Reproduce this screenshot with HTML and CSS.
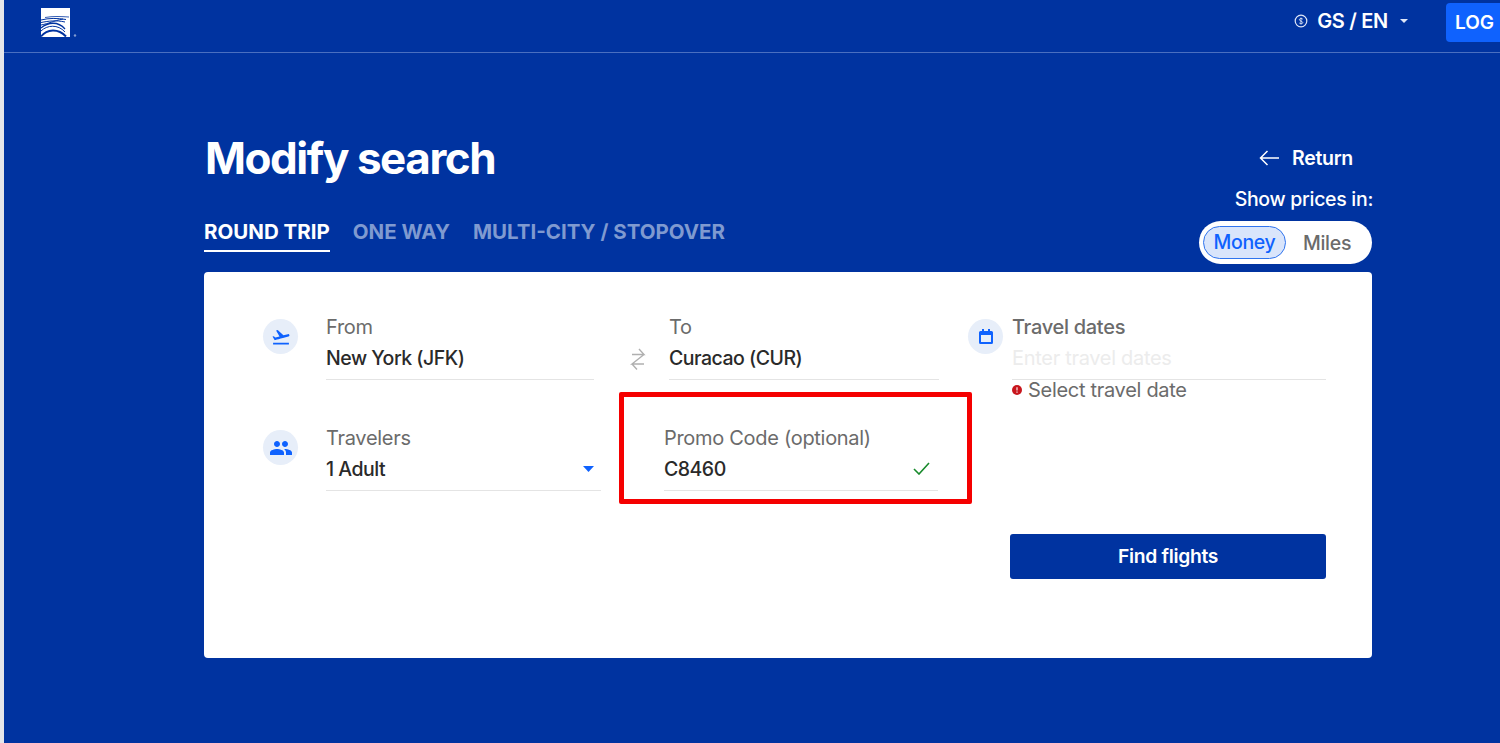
FILE: index.html
```html
<!DOCTYPE html>
<html lang="en">
<head>
<meta charset="utf-8">
<title>Modify search</title>
<link rel="stylesheet" href="styles.css">
</head>
<body>
<header class="topbar">
  <a class="logo">
    <svg width="30" height="30" viewBox="0 0 30 30">
      <rect width="29" height="29" fill="#fff"/>
      <g fill="none" stroke="#0033a0">
        <path d="M4 9.500C12 8 20 8.500 28 9" stroke-width=".8"/>
        <path d="M0 12C8 10 16 10 25 11.500" stroke-width="1"/>
        <path d="M0 14.500C8 13 15 12 24 14" stroke-width="1"/>
        <path d="M0 17C8 15.500 12 13 22 11" stroke-width="1"/>
        <path d="M0 20C7 14 17 13 24 21" stroke-width="1.300"/>
        <path d="M0 23C6 17 17 16 24 24" stroke-width="1"/>
        <path d="M0 28.500C6 21 17 20 25 28.500" stroke-width="2"/>
      </g>
      <circle cx="34" cy="27.500" r="1.200" fill="#7f9ad0"/>
    </svg>
  </a>
  <div class="top-actions">
    <svg class="coin" width="14" height="14" viewBox="0 0 14 14"><circle cx="7" cy="7" r="5.800" fill="none" stroke="#dfe7f7" stroke-width="1.200"/><path d="M8.800 5.200C8.200 4.200 5.400 4.200 5.400 5.700S8.800 7.200 8.800 8.600 5.900 10 5.300 9M7 3.600v6.800" fill="none" stroke="#dfe7f7" stroke-width=".9"/></svg>
    <span class="locale">GS / EN</span>
    <svg class="caret" width="8" height="4" viewBox="0 0 8 4"><path d="M0 0h8L4 4z" fill="#dfe7f7"/></svg>
    <button class="login">LOG</button>
  </div>
</header>

<main class="main">
  <section class="intro">
    <div class="intro-left">
      <h1 class="title">Modify search</h1>
      <nav class="tabs">
        <span class="tab tab-active">ROUND TRIP</span>
        <span class="tab">ONE WAY</span>
        <span class="tab">MULTI-CITY / STOPOVER</span>
      </nav>
    </div>
    <div class="intro-right">
      <a class="return">
        <svg width="21" height="16" viewBox="0 0 21 16"><path d="M20 8H1.500M8.500 1 1.500 8l7 7" fill="none" stroke="#fff" stroke-width="1.500"/></svg>
        <span>Return</span>
      </a>
      <div class="show-prices">Show prices in:</div>
      <div class="toggle">
        <span class="toggle-opt toggle-on">Money</span>
        <span class="toggle-opt">Miles</span>
      </div>
    </div>
  </section>

  <section class="card">
    <div class="grid">
      <div class="cell cell-icon">
        <span class="badge">
          <svg width="20" height="20" viewBox="0 0 24 24"><path d="M2.500 19h19v2h-19v-2zm19.570-9.360c-.21-.8-1.040-1.280-1.840-1.060L14.920 10l-6.900-6.430-1.930.51 4.140 7.170-4.970 1.330-1.970-1.540-1.450.39 2.590 4.490s7.120-1.900 16.570-4.430c.81-.23 1.280-1.050 1.070-1.850z" fill="#0f62fe"/></svg>
        </span>
        <div class="field">
          <div class="label">From</div>
          <div class="value">New York (JFK)</div>
        </div>
      </div>

      <div class="cell cell-swap">
        <svg class="swap" width="16" height="24" viewBox="0 0 16 24"><path d="M2 7.500h12L9 2M14 7.500 2 17h12M2 17l5 5.500" fill="none" stroke="#b0b0b0" stroke-width="1.400"/></svg>
        <div class="field field-to">
          <div class="label">To</div>
          <div class="value">Curacao (CUR)</div>
        </div>
      </div>

      <div class="cell cell-dates">
        <span class="badge">
          <svg width="14" height="15" viewBox="0 0 14 15"><path d="M3 0h2v2h4V0h2v2h1.500A1.500 1.500 0 0 1 14 3.500v10a1.500 1.500 0 0 1-1.500 1.500h-11A1.500 1.500 0 0 1 0 13.500v-10A1.500 1.500 0 0 1 1.500 2H3zM2 6v7h10V6z" fill="#0f62fe"/></svg>
        </span>
        <div class="field field-dates">
          <div class="label label-strong">Travel dates</div>
          <div class="value placeholder">Enter travel dates</div>
          <div class="error">
            <svg width="10" height="10" viewBox="0 0 10 10"><circle cx="5" cy="5" r="5" fill="#c8161d"/><path d="M5 2.200v3.300M5 6.600v1.200" stroke="#fff" stroke-width="1.100"/></svg>
            <span>Select travel date</span>
          </div>
        </div>
      </div>

      <div class="cell cell-icon">
        <span class="badge">
          <svg width="24" height="24" viewBox="0 0 24 24"><path d="M16 11c1.660 0 2.990-1.340 2.990-3S17.660 5 16 5c-1.660 0-3 1.340-3 3s1.340 3 3 3zm-8 0c1.660 0 2.990-1.340 2.990-3S9.660 5 8 5C6.340 5 5 6.340 5 8s1.340 3 3 3zm0 2c-2.330 0-7 1.170-7 3.500V19h14v-2.500c0-2.330-4.670-3.500-7-3.500zm8 0c-.29 0-.62.02-.97.05 1.160.84 1.970 1.970 1.970 3.450V19h6v-2.500c0-2.330-4.670-3.500-7-3.500z" fill="#0f62fe"/></svg>
        </span>
        <div class="field field-wide">
          <div class="label">Travelers</div>
          <div class="value value-select">
            <span>1 Adult</span>
            <svg class="drop" width="11" height="6" viewBox="0 0 11 6"><path d="M0 0h11L5.500 6z" fill="#0f62fe"/></svg>
          </div>
        </div>
      </div>

      <div class="cell cell-promo">
        <div class="field field-promo">
          <div class="label">Promo Code (optional)</div>
          <div class="value value-select">
            <span>C8460</span>
            <svg class="check" width="17" height="13" viewBox="0 0 17 13"><path d="M1 7l5 5L16 1" fill="none" stroke="#188a2c" stroke-width="1.600"/></svg>
          </div>
          <span class="highlight"></span>
        </div>
      </div>
    </div>

    <div class="actions">
      <button class="find">Find flights</button>
    </div>
  </section>
</main>
</body>
</html>
```

FILE: styles.css
```css
* { box-sizing: border-box; }
html, body { height: 100%; }
body {
  margin: 0;
  height: 743px;
  overflow: hidden;
  background: #0033a0;
  border-left: 4px solid #e4e6ea;
  font-family: "Inter", "Liberation Sans", sans-serif;
  color: #fff;
}
.topbar {
  height: 53px;
  border-bottom: 1px solid #4a6fc0;
  display: flex;
  justify-content: space-between;
  align-items: flex-start;
  padding-left: 37px;
}
.logo { display: block; margin-top: 8px; }
.logo svg { display: block; overflow: visible; }
.top-actions { display: flex; align-items: center; height: 42px; }
.coin { margin-right: 9px; }
.locale { font-size: 20px; font-weight: 600; letter-spacing: -0.3px; margin-right: 12px; }
.caret { margin-right: 38px; }
.login {
  width: 54px;
  height: 39px;
  margin-top: 3px;
  border: 0;
  border-radius: 4px 0 0 4px;
  background: #0f62fe;
  color: #fff;
  font: 600 19px "Inter", "Liberation Sans", sans-serif;
  text-align: left;
  padding: 0 0 0 9px;
}
.main { padding: 80px 0 0 200px; width: 1368px; }
.intro { display: flex; justify-content: space-between; align-items: flex-start; height: 139px; }
.title {
  margin: 0;
  font-size: 44px;
  line-height: 50px;
  font-weight: 700;
  letter-spacing: -1.450px;
  padding-left: 1px;
}
.tabs { display: flex; gap: 23px; margin-top: 35px; }
.tab {
  font-size: 20.500px;
  line-height: 27px;
  height: 34px;
  font-weight: 700;
  color: #7f9ad0;
  border-bottom: 2px solid transparent;
}
.tab-active { color: #fff; border-bottom-color: #fff; }
.intro-right { display: flex; flex-direction: column; align-items: flex-end; }
.return { display: flex; align-items: center; gap: 12px; margin: 13px 19px 0 0; height: 24px; font-size: 19.500px; font-weight: 600; letter-spacing: -0.3px; }
.return svg { display: block; }
.show-prices { margin-top: 16px; height: 26px; line-height: 26px; font-size: 19.500px; font-weight: 500; letter-spacing: -0.3px; margin-right: -1px; }
.toggle {
  margin-top: 9px;
  width: 173px;
  height: 43px;
  background: #fff;
  border-radius: 22px;
  display: flex;
  align-items: center;
  padding-left: 4px;
  gap: 17px;
}
.toggle-opt { font-size: 19.500px; font-weight: 500; color: #6b6b6b; letter-spacing: -0.3px; }
.toggle-on {
  width: 83px;
  height: 33px;
  line-height: 30px;
  text-align: center;
  color: #0f62fe;
  background: #d9e5fb;
  border: 1.500px solid #2f74ee;
  border-radius: 17px;
}
.card {
  height: 386px;
  background: #fff;
  border-radius: 4px;
  padding: 44px 46px 0 59px;
  color: #2a2a2a;
}
.grid {
  display: grid;
  grid-template-columns: 338px 367px 358px;
  grid-auto-rows: 111px;
}
.cell { display: flex; align-items: flex-start; }
.badge {
  width: 35px;
  height: 35px;
  margin-top: 3px;
  flex: none;
  border-radius: 50%;
  background: #e7eef9;
  display: flex;
  align-items: center;
  justify-content: center;
}
.field { flex: none; width: 268px; margin-left: 28px; }
.field-wide { width: 275px; }
.cell-swap .swap { margin: 31px 0 0 29px; flex: none; }
.field-to { width: 270px; margin-left: 23px; }
.cell-dates .field-dates { width: 314px; margin-left: 9px; }
.cell-promo { padding-left: 63px; }
.field-promo { position: relative; width: 274px; margin-left: 0; }
.label { height: 24px; line-height: 22px; font-size: 20px; color: #6b6b6b; letter-spacing: -0.3px; }
.label-strong { font-weight: 500; }
.value {
  height: 40px;
  line-height: 36px;
  font-size: 19.500px;
  font-weight: 500;
  letter-spacing: -0.5px;
  color: #2a2a2a;
  border-bottom: 1px solid #e4e4e4;
}
.value-select { display: flex; align-items: center; justify-content: space-between; padding: 0 7px 4px 0; }
.placeholder { color: #ececec; font-weight: 400; font-size: 20px; letter-spacing: -0.3px; }
.check { margin-right: 1px; }
.error { display: flex; align-items: center; gap: 6px; height: 22px; line-height: 20px; font-size: 20px; color: #6b6b6b; letter-spacing: -0.3px; padding-bottom: 2px; }
.highlight {
  position: absolute;
  left: -45px;
  top: -35px;
  width: 353px;
  height: 112px;
  border: 5px solid #f50000;
  border-radius: 2px;
  pointer-events: none;
}
.actions { display: flex; justify-content: flex-end; margin-top: -4px; }
.find {
  width: 316px;
  height: 45px;
  border: 0;
  border-radius: 3px;
  background: #0033a0;
  color: #fff;
  font: 600 19.300px "Inter", "Liberation Sans", sans-serif;
  letter-spacing: -0.3px;
  padding: 0 0 2px;
}
```
